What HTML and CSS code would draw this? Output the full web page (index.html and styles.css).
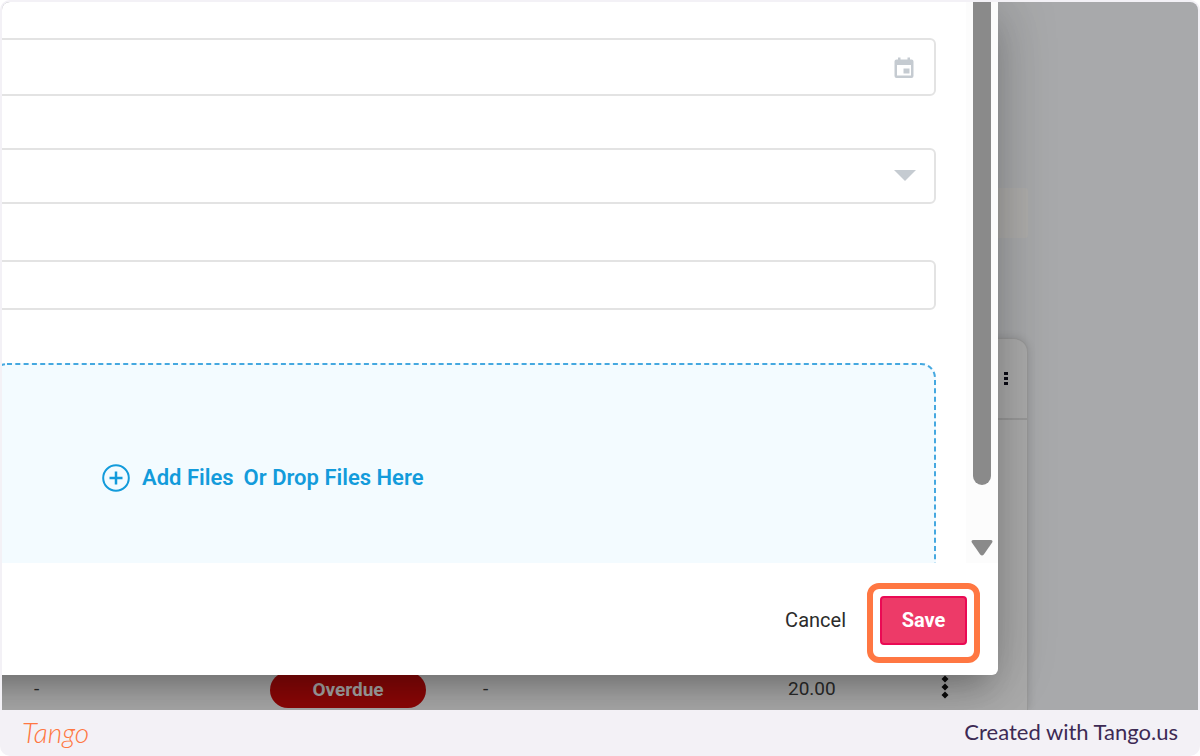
FILE: index.html
```html
<!DOCTYPE html>
<html lang="en">
<head>
    <meta charset="UTF-8">
    <meta name="viewport" content="width=device-width, initial-scale=1.0">
    <title>Tango</title>
    <link rel="stylesheet" href="styles.css">
</head>
<body>
    <div class="frame">
        <main class="shot">
            <div class="page">
                <div class="toolbar"></div>
                <section class="card">
                    <header class="card-header">
                        <button class="dots" type="button" aria-label="Table options">
                            <svg width="6" height="16" viewBox="0 0 6 16" fill="#0c0c16">
                                <rect x="1" y="1" width="4" height="3"/>
                                <rect x="1" y="6" width="4" height="3"/>
                                <rect x="1" y="11" width="4" height="3"/>
                            </svg>
                        </button>
                    </header>
                    <table class="invoices">
                        <tbody>
                            <tr>
                                <td class="col-ref">-</td>
                                <td class="col-status"><span class="pill">Overdue</span></td>
                                <td class="col-note">-</td>
                                <td class="col-amount">20.00</td>
                                <td class="col-menu">
                                    <button class="dots" type="button" aria-label="Row options">
                                        <svg width="8" height="24" viewBox="0 0 8 24" fill="#0c0c0c">
                                            <path d="M4 0.500l3.500 3.500L4 7.500.5 4zM4 8.500l3.500 3.500L4 15.500.5 12zM4 16.500l3.500 3.500L4 23.500.5 20z"/>
                                        </svg>
                                    </button>
                                </td>
                            </tr>
                        </tbody>
                    </table>
                </section>
            </div>

            <form class="dialog">
                <div class="dialog-body">
                    <div class="fields">
                        <div class="field">
                            <input class="control date" type="text" aria-label="Date">
                            <svg class="field-icon" width="24" height="24" viewBox="0 0 24 24" fill="#c5cbd1">
                                <path fill-rule="evenodd" d="M6 1.500h2.500v2h7v-2H18v2h1.500a2 2 0 0 1 2 2V20a2 2 0 0 1-2 2h-15a2 2 0 0 1-2-2V5.500a2 2 0 0 1 2-2H6zM5 9v10.500h14V9z"/>
                                <rect x="11.500" y="12.500" width="6" height="5"/>
                            </svg>
                        </div>
                        <div class="field">
                            <select class="control select" aria-label="Category"><option></option></select>
                            <svg class="field-icon" width="22" height="12" viewBox="0 0 22 12" fill="#c5cbd1">
                                <path d="M0 0h22L11 11z"/>
                            </svg>
                        </div>
                        <div class="field">
                            <input class="control text" type="text" aria-label="Note">
                        </div>
                        <div class="dropzone">
                            <svg class="dashes" aria-hidden="true"><rect rx="14"/></svg>
                            <button class="add-files" type="button">
                                <svg width="28" height="28" viewBox="0 0 28 28" fill="none" stroke="#139bdb" stroke-width="2">
                                    <circle cx="14" cy="14" r="12.800"/>
                                    <path d="M14 7.500v13M7.500 14h13" stroke-width="2.500"/>
                                </svg>
                                <span>Add Files</span>
                            </button>
                            <span class="drop-text">Or Drop Files Here</span>
                        </div>
                    </div>
                    <div class="scrollbar">
                        <div class="thumb"></div>
                        <svg width="22" height="16" viewBox="0 0 22 16" fill="#8a8a8a">
                            <path d="M2.500 0h17q3 0 1.500 2.800L12.800 14.500q-1.800 2-3.600 0L1 2.800Q-.5 0 2.500 0z"/>
                        </svg>
                    </div>
                </div>
                <div class="dialog-actions">
                    <button class="cancel" type="button">Cancel</button>
                    <button class="save" type="button">Save</button>
                </div>
            </form>
        </main>
        <footer class="credit">
            <a class="logo" href="#">Tango</a>
            <a class="created" href="#">Created with Tango.us</a>
        </footer>
    </div>
</body>
</html>
```
FILE: styles.css
```css
* {
    box-sizing: border-box;
}
body {
    margin: 0;
    background: #fff;
    font-family: Roboto, "Liberation Sans", sans-serif;
    font-size: 20px;
    line-height: 24px;
}
button {
    padding: 0;
    border: 0;
    background: none;
    font: inherit;
    color: inherit;
}
svg {
    display: block;
}
a {
    text-decoration: none;
}

.frame {
    display: flex;
    flex-direction: column;
    min-height: 100vh;
    padding: 2px 2px 0;
    border-radius: 10px;
    background: #f3f1f6;
}
.shot {
    position: relative;
    display: flex;
    flex: 1;
    overflow: hidden;
    border-radius: 8px 8px 0 0;
    background: #a8a9ab;
}

/* page behind the dialog */
.page {
    display: flex;
    flex: 1;
    flex-direction: column;
    padding: 186px 170px 0 0;
}
.toolbar {
    height: 50px;
    border-radius: 0 3px 3px 0;
    background: #adacaa;
}
.card {
    display: flex;
    flex: 1;
    flex-direction: column;
    margin-top: 100px;
    border-right: 1px solid #999;
    border-top: 1px solid #999;
    border-radius: 0 14px 0 0;
    background: #ababab;
    box-shadow: 0 0 8px rgba(0, 0, 0, 0.15);
}
.card-header {
    display: flex;
    align-items: center;
    justify-content: flex-end;
    height: 81px;
    padding-right: 18px;
    border-bottom: 2px solid #999;
}
.invoices {
    width: 100%;
    margin-top: auto;
    border-collapse: collapse;
    table-layout: fixed;
    color: #2c2c2c;
    font-size: 19px;
}
.invoices td {
    height: 40px;
    padding: 0 0 2px;
}
.invoices .col-ref {
    padding-left: 32px;
}
.invoices .col-status {
    width: 213px;
    padding: 0;
}
.invoices .col-note {
    width: 305px;
}
.invoices .col-amount {
    width: 153px;
}
.invoices .col-menu {
    width: 86px;
    padding: 0;
}
.pill {
    display: block;
    width: 156px;
    border-radius: 18px;
    background: #8e0808;
    color: #aaa;
    font-weight: 700;
    line-height: 36px;
    text-align: center;
}

/* dialog, its left part runs out of view */
.dialog {
    position: absolute;
    top: 0;
    left: -80px;
    right: 200px;
    padding-left: 80px;
    border-radius: 0 0 6px 0;
    background: #fff;
    box-shadow: 0 20px 27px -13px rgba(0, 0, 0, 0.2),
                0 20px 50px 0 rgba(0, 0, 0, 0.12),
                0 0 60px 4px rgba(0, 0, 0, 0.15);
}
.dialog-body {
    display: flex;
    overflow: hidden;
}
.fields {
    display: grid;
    flex: 1;
    grid-template-rows: 110px 112px 103px 200px;
    margin-left: -10px;
    padding: 36px 30px 0 0;
}
.field {
    position: relative;
}
.control {
    display: block;
    width: 100%;
    padding: 0 60px 0 30px;
    border: 2px solid #e3e3e3;
    border-radius: 6px;
    background: #fff;
    font: inherit;
    appearance: none;
}
.date {
    height: 58px;
}
.select {
    height: 56px;
}
.text {
    height: 50px;
}
.field-icon {
    position: absolute;
    top: 18px;
    right: 20px;
    pointer-events: none;
}
.select + .field-icon {
    top: 22px;
}
.dropzone {
    position: relative;
    display: flex;
    align-items: center;
    gap: 10px;
    padding: 30px 0 0 110px;
    border-radius: 0 14px 0 0;
    background: #f3fbff;
    color: #139bdb;
    font-size: 22px;
    font-weight: 600;
}
.dashes {
    position: absolute;
    top: 0;
    left: 0;
    width: 100%;
    height: 100%;
}
.dashes rect {
    x: 1px;
    y: 1px;
    width: calc(100% - 2px);
    height: calc(100% + 40px);
    fill: none;
    stroke: #45a8e0;
    stroke-width: 2px;
    stroke-dasharray: 5 3.3;
}
.add-files {
    display: flex;
    align-items: center;
    gap: 12px;
}
.scrollbar {
    display: flex;
    flex-direction: column;
    align-items: center;
    justify-content: space-between;
    width: 32px;
    padding-bottom: 7px;
    background: #fcfcfc;
}
.thumb {
    width: 18px;
    height: 483px;
    border-radius: 0 0 9px 9px;
    background: #8a8a8a;
}
.dialog-actions {
    display: flex;
    justify-content: flex-end;
    gap: 34px;
    padding: 33px 31px 30px;
}
.cancel {
    padding-bottom: 2px;
    color: #2b2b2b;
}
.save {
    position: relative;
    width: 87px;
    height: 49px;
    padding-bottom: 2px;
    border: 2px solid #ea0a54;
    border-radius: 4px;
    background: #ed3a68;
    color: #fff;
    font-weight: 700;
}
/* highlight ring around the button */
.save::after {
    content: "";
    position: absolute;
    inset: -15px -15px -20px;
    border: 6px solid #ff7742;
    border-radius: 12px;
}

.credit {
    display: flex;
    align-items: center;
    justify-content: space-between;
    height: 46px;
    padding: 0 20px 2px;
    font-family: Lato, "Open Sans", sans-serif;
    font-size: 22px;
}
.logo {
    color: #ff7742;
    font-size: 28px;
    font-style: italic;
    font-weight: 300;
}
.created {
    color: #3d2a54;
}
```
